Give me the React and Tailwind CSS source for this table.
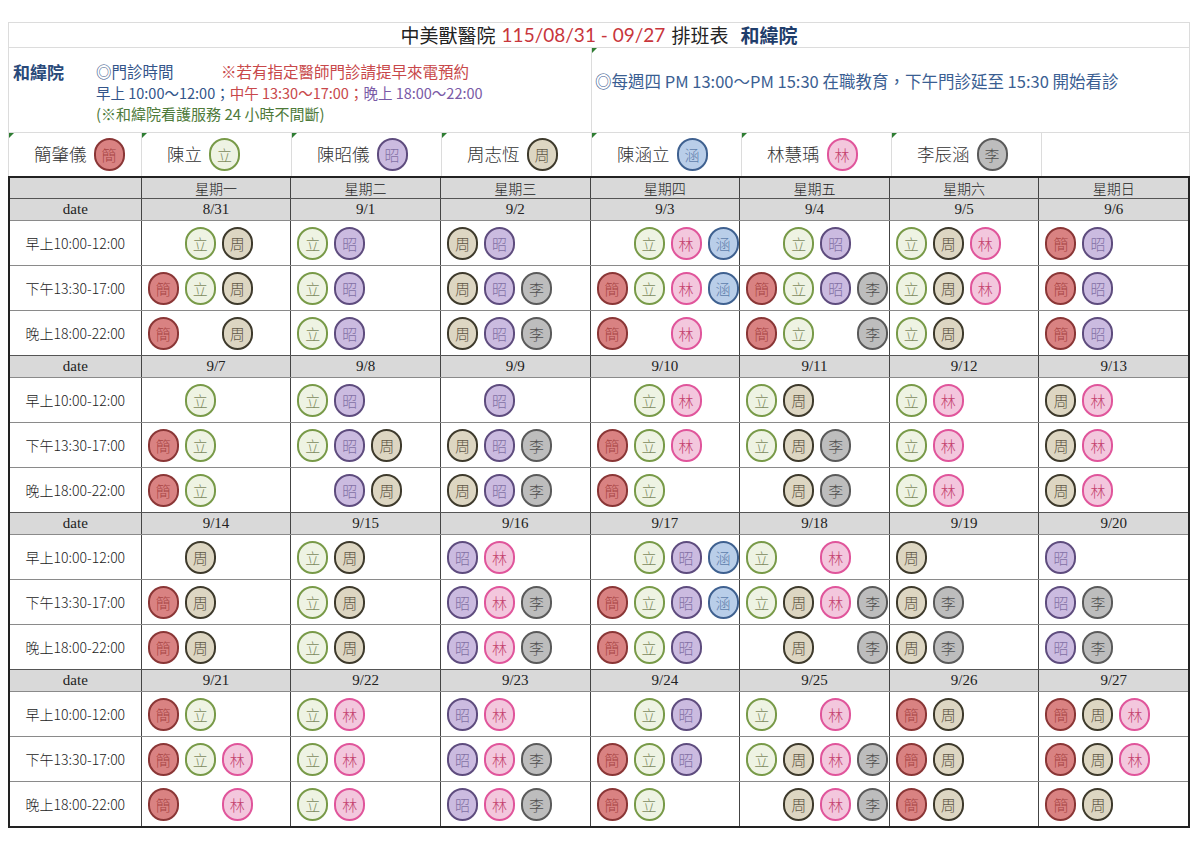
import React from "react";

const PEOPLE = {
  J: { ch: "簡", name: "簡肇儀", cls: "bg-[#d98282] border-[#8a3636] text-[#a84444]" },
  L: { ch: "立", name: "陳立", cls: "bg-[#eef3e3] border-[#789a48] text-[#7c8a5c]" },
  Z: { ch: "昭", name: "陳昭儀", cls: "bg-[#cbbbe0] border-[#5e4c7e] text-[#8270a4]" },
  C: { ch: "周", name: "周志恆", cls: "bg-[#ddd6c2] border-[#3e3a2c] text-[#5f5646]" },
  H: { ch: "涵", name: "陳涵立", cls: "bg-[#b9cee9] border-[#3f6190] text-[#5f80ac]" },
  M: { ch: "林", name: "林慧瑀", cls: "bg-[#f3c7dd] border-[#e0559b] text-[#c4426e]" },
  P: { ch: "李", name: "李辰涵", cls: "bg-[#bdbdbd] border-[#5a5a5a] text-[#505050]" },
};

const LEGEND = ["J", "L", "Z", "C", "H", "M", "P"];
const WEEKDAYS = ["星期一", "星期二", "星期三", "星期四", "星期五", "星期六", "星期日"];
const SHIFTS = ["早上10:00-12:00", "下午13:30-17:00", "晚上18:00-22:00"];

// each day: [morning, afternoon, evening], each a 4 slot string ("_" = empty)
const WEEKS = [
  {
    dates: ["8/31", "9/1", "9/2", "9/3", "9/4", "9/5", "9/6"],
    days: [
      ["_LC_", "JLC_", "J_C_"],
      ["LZ__", "LZ__", "LZ__"],
      ["CZ__", "CZP_", "CZP_"],
      ["_LMH", "JLMH", "J_M_"],
      ["_LZ_", "JLZP", "JL_P"],
      ["LCM_", "LCM_", "LC__"],
      ["JZ__", "JZ__", "JZ__"],
    ],
  },
  {
    dates: ["9/7", "9/8", "9/9", "9/10", "9/11", "9/12", "9/13"],
    days: [
      ["_L__", "JL__", "JL__"],
      ["LZ__", "LZC_", "_ZC_"],
      ["_Z__", "CZP_", "CZP_"],
      ["_LM_", "JLM_", "JL__"],
      ["LC__", "LCP_", "_CP_"],
      ["LM__", "LM__", "LM__"],
      ["CM__", "CM__", "CM__"],
    ],
  },
  {
    dates: ["9/14", "9/15", "9/16", "9/17", "9/18", "9/19", "9/20"],
    days: [
      ["_C__", "JC__", "JC__"],
      ["LC__", "LC__", "LC__"],
      ["ZM__", "ZMP_", "ZMP_"],
      ["_LZH", "JLZH", "JLZ_"],
      ["L_M_", "LCMP", "_C_P"],
      ["C___", "CP__", "CP__"],
      ["Z___", "ZP__", "ZP__"],
    ],
  },
  {
    dates: ["9/21", "9/22", "9/23", "9/24", "9/25", "9/26", "9/27"],
    days: [
      ["JL__", "JLM_", "J_M_"],
      ["LM__", "LM__", "LM__"],
      ["ZM__", "ZMP_", "ZMP_"],
      ["_LZ_", "JLZ_", "JL__"],
      ["L_M_", "LCMP", "_CMP"],
      ["JC__", "JC__", "JC__"],
      ["JCM_", "JCM_", "JC__"],
    ],
  },
];

const cjk = "font-['Noto_Sans_CJK_TC','Noto_Sans_CJK_SC',sans-serif]";

const Badge = ({ code }) => {
  const p = PEOPLE[code];
  return (
    <div
      className={`flex h-[33px] w-[31px] shrink-0 items-center justify-center rounded-full border-[2.5px] text-[15px] font-light leading-none ${p.cls}`}
    >
      {p.ch}
    </div>
  );
};

const Mark = () => (
  <span className="absolute left-0 top-0 h-0 w-0 border-r-[5px] border-t-[5px] border-r-transparent border-t-[#2e7d32]" />
);

const Slots = ({ slots }) => (
  <div className="flex h-full items-center gap-[6px] pl-[6px]">
    {slots.split("").map((s, i) =>
      s === "_" ? <div key={i} className="w-[31px] shrink-0" /> : <Badge key={i} code={s} />
    )}
  </div>
);

const WeekBlock = ({ week }) => (
  <>
    <div className="flex h-[22px] border-t border-[#555] bg-[#d9d9d9] text-[15px] text-[#222] font-['Liberation_Serif',serif]">
      <div className="flex w-[131px] items-center justify-center">date</div>
      {week.dates.map((d) => (
        <div key={d} className="flex w-[150px] items-center justify-center border-l border-[#444]">
          {d}
        </div>
      ))}
    </div>
    {SHIFTS.map((shift, si) => (
      <div key={shift} className="flex h-[45px] border-t border-[#8a8a8a]">
        <div className={`flex w-[131px] items-center justify-center text-[14px] font-light text-[#222] ${cjk}`}>
          {shift}
        </div>
        {week.days.map((day, di) => (
          <div key={di} className="w-[150px] border-l border-[#444]">
            <Slots slots={day[si]} />
          </div>
        ))}
      </div>
    ))}
  </>
);

export default function App() {
  return (
    <div className={`min-h-[849px] bg-white pl-[8px] pt-[22px] ${cjk}`}>
      <div className="w-[1182px]">
        <div className="flex h-[26px] items-center justify-center border border-[#dcdcdc] text-[19px] text-[#222]">
          <span>中美獸醫院</span>
          <span className="ml-[6px] font-['Lato',sans-serif] text-[#c8363c]">115/08/31 - 09/27</span>
          <span className="ml-[6px]">排班表</span>
          <span className="ml-[12px] font-bold text-[#1f3d6b]">和緯院</span>
        </div>

        <div className="flex h-[85px] border-x border-b border-[#dcdcdc]">
          <div className="w-[582px] pl-[4px] pt-[13px] leading-[21px]">
            <div className="flex text-[15.5px]">
              <span className="w-[83px] text-[17px] font-bold text-[#2a4a7a]">和緯院</span>
              <span className="w-[125px] text-[#33558a]">◎門診時間</span>
              <span className="text-[#c8484a]">※若有指定醫師門診請提早來電預約</span>
            </div>
            <div className="pl-[83px] text-[14.5px]">
              <span className="text-[#33558a]">早上 10:00～12:00；</span>
              <span className="text-[#c8484a]">中午 13:30～17:00；</span>
              <span className="text-[#7a5aa6]">晚上 18:00～22:00</span>
            </div>
            <div className="pl-[83px] text-[15px] text-[#4e7a3a]">(※和緯院看護服務 24 小時不間斷)</div>
          </div>
          <div className="relative flex flex-1 items-start border-l border-[#dcdcdc] pl-[3px] pt-[21px] text-[16.5px] text-[#3a5e92]">
            <Mark />
            ◎每週四 PM 13:00～PM 15:30 在職教育，下午門診延至 15:30 開始看診
          </div>
        </div>

        <div className="flex h-[43px] border-x border-[#dcdcdc]">
          {LEGEND.map((code, i) => (
            <div
              key={code}
              className={`relative flex items-center gap-[7px] pl-[25px] text-[17.5px] font-light text-[#333] ${
                i === 0 ? "w-[132px]" : "w-[150px] border-l border-[#dcdcdc]"
              }`}
            >
              <Mark />
              <span>{PEOPLE[code].name}</span>
              <Badge code={code} />
            </div>
          ))}
          <div className="flex-1 border-l border-[#dcdcdc]" />
        </div>

        <div className="border-2 border-[#222]">
          <div className="flex h-[20px] bg-[#d9d9d9] text-[14px] font-light text-[#222]">
            <div className="w-[131px]" />
            {WEEKDAYS.map((w) => (
              <div key={w} className="flex w-[150px] items-center justify-center border-l border-[#444]">
                {w}
              </div>
            ))}
          </div>
          {WEEKS.map((week, i) => (
            <WeekBlock key={i} week={week} />
          ))}
        </div>
      </div>
    </div>
  );
}
